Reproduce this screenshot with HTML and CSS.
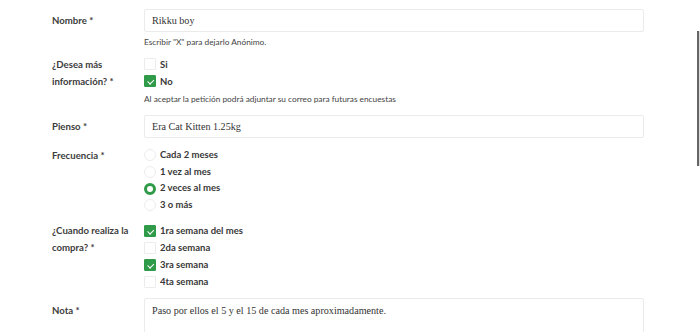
FILE: index.html
```html
<!DOCTYPE html>
<html lang="es">
  <head>
    <meta charset="UTF-8" />
    <meta name="viewport" content="width=device-width, initial-scale=1.0" />
    <title>Encuesta</title>
    <link rel="stylesheet" href="styles.css">
  </head>

  <body>
    <div class="form">
      <div class="row row-nombre">
        <label class="label label-input">Nombre *</label>
        <div class="field">
          <div class="input">Rikku boy</div>
          <p class="help help-first">Escribir "X" para dejarlo Anónimo.</p>
        </div>
      </div>

      <div class="row row-info">
        <label class="label">¿Desea más información? *</label>
        <div class="field">
          <div class="options">
            <div class="option"><span class="check"></span>Si</div>
            <div class="option"><span class="check checked"></span>No</div>
          </div>
          <p class="help">Al aceptar la petición podrá adjuntar su correo para futuras encuestas</p>
        </div>
      </div>

      <div class="row row-pienso">
        <label class="label label-input">Pienso *</label>
        <div class="field">
          <div class="input">Era Cat Kitten 1.25kg</div>
        </div>
      </div>

      <div class="row row-frecuencia">
        <label class="label">Frecuencia *</label>
        <div class="field">
          <div class="options radios">
            <div class="option"><span class="radio"></span>Cada 2 meses</div>
            <div class="option"><span class="radio"></span>1 vez al mes</div>
            <div class="option"><span class="radio checked"></span>2 veces al mes</div>
            <div class="option"><span class="radio"></span>3 o más</div>
          </div>
        </div>
      </div>

      <div class="row row-compra">
        <label class="label">¿Cuando realiza la compra? *</label>
        <div class="field">
          <div class="options">
            <div class="option"><span class="check checked"></span>1ra semana del mes</div>
            <div class="option"><span class="check"></span>2da semana</div>
            <div class="option"><span class="check checked"></span>3ra semana</div>
            <div class="option"><span class="check"></span>4ta semana</div>
          </div>
        </div>
      </div>

      <div class="row row-nota">
        <label class="label label-area">Nota *</label>
        <div class="field">
          <div class="input textarea">Paso por ellos el 5 y el 15 de cada mes aproximadamente.</div>
        </div>
      </div>
    </div>

    <div class="scrollbar"></div>
  </body>
</html>
```

FILE: styles.css
```css
body {
  margin: 0;
  background: #fff;
  font-family: Lato, "Open Sans", sans-serif;
  color: #333;
  overflow: hidden;
}

.form {
  padding: 9px 0 0 52px;
}

.row {
  display: grid;
  grid-template-columns: 92px 500px;
}

.label {
  font-size: 9.6px;
  font-weight: 700;
  line-height: 17px;
  color: #3c3c3c;
  padding-right: 6px;
}
.label-input {
  padding-top: 3px;
}
.label-area {
  padding-top: 3.5px;
}

.input {
  height: 23px;
  box-sizing: border-box;
  border: 1px solid #ebebeb;
  border-radius: 2px;
  padding: 0 7px;
  font-family: "Liberation Serif", "DejaVu Serif", serif;
  font-size: 10.15px;
  line-height: 21px;
  color: #333;
}

.textarea {
  height: 40px;
  padding-top: 5px;
  line-height: 14px;
}

.help {
  margin: 0;
  font-size: 8.3px;
  line-height: 12px;
  color: #444;
}
.help-first {
  margin-top: 4px;
}

.row-info {
  margin-top: 7.5px;
}
.row-info .help {
  margin-top: 3.5px;
}

.row-pienso {
  margin-top: 10px;
}

.row-frecuencia {
  margin-top: 9px;
}
.radios .option {
  line-height: 16.7px;
}

.row-compra {
  margin-top: 8.5px;
}

.row-nota {
  margin-top: 8px;
}

.options {
  display: flex;
  flex-direction: column;
}

.option {
  display: flex;
  align-items: center;
  gap: 4px;
  font-size: 9.5px;
  font-weight: 700;
  line-height: 17px;
  color: #383838;
}

.check {
  width: 12px;
  height: 12px;
  box-sizing: border-box;
  border: 1px solid #ececec;
  border-radius: 1px;
  background: #fff;
  position: relative;
}
.check.checked {
  background: #2f9a47;
  border-color: #2f9a47;
}
.check.checked::after {
  content: "";
  position: absolute;
  left: 3.5px;
  top: 2px;
  width: 2.5px;
  height: 4.5px;
  border: solid #fff;
  border-width: 0 1.5px 1.5px 0;
  transform: rotate(45deg);
}

.radio {
  width: 12px;
  height: 12px;
  box-sizing: border-box;
  border: 1px solid #ececec;
  border-radius: 50%;
  background: #fff;
}
.radio.checked {
  border: 3px solid #2f9a47;
}

.scrollbar {
  position: absolute;
  top: 31px;
  right: 0;
  width: 3px;
  height: 135px;
  border-left: 2px solid #666;
  background: #ddd;
  box-sizing: border-box;
}
```
